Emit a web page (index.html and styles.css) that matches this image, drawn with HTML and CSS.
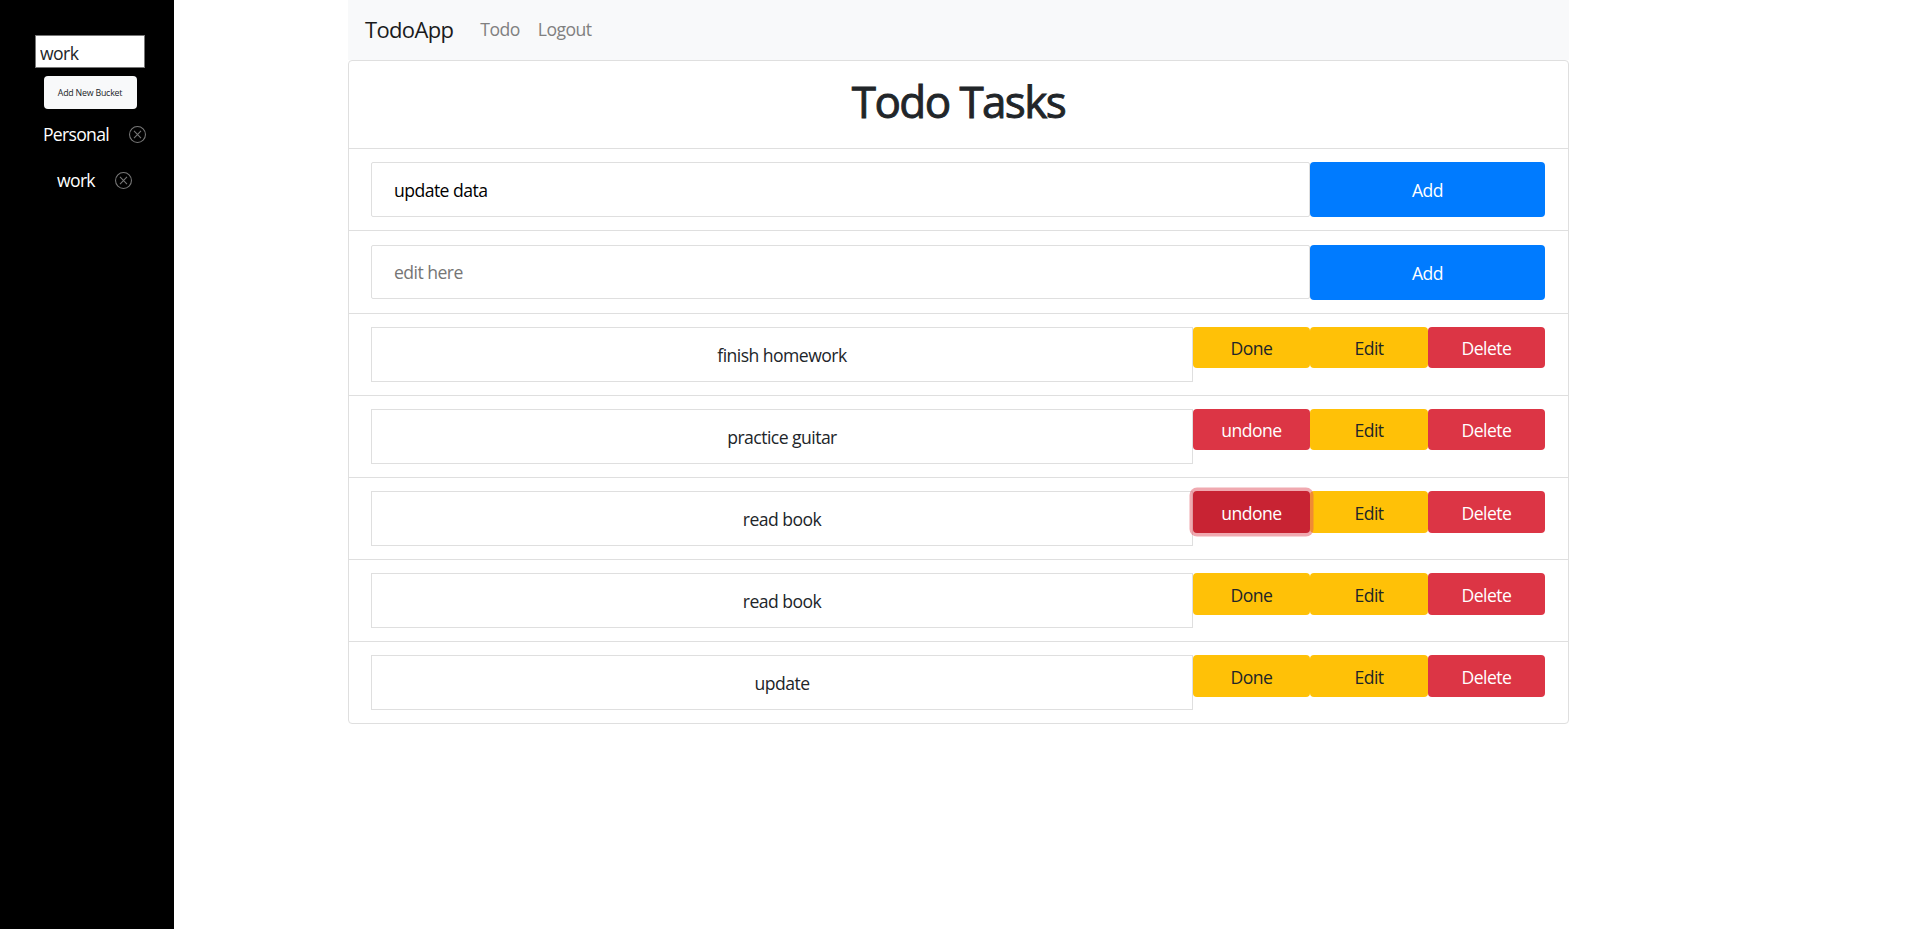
FILE: index.html
```html
<!DOCTYPE html>
<html lang="en">
<head>
<meta charset="utf-8">
<title>TodoApp</title>
<link rel="stylesheet" href="styles.css">
</head>
<body>
<aside class="sidebar">
  <input class="bucket-input" type="text" value="work" aria-label="Bucket name">
  <button class="bucket-add">Add New Bucket</button>
  <ul class="buckets">
    <li class="bucket"><a class="bucket-name">Personal</a><svg class="remove" viewBox="0 0 16 16"><circle cx="8" cy="8" r="7.5"/><path d="M4.7 4.7l6.6 6.6M11.3 4.7l-6.6 6.6"/></svg></li>
    <li class="bucket"><a class="bucket-name">work</a><svg class="remove" viewBox="0 0 16 16"><circle cx="8" cy="8" r="7.5"/><path d="M4.7 4.7l6.6 6.6M11.3 4.7l-6.6 6.6"/></svg></li>
  </ul>
</aside>
<main class="container">
  <nav class="navbar">
    <a class="brand">TodoApp</a>
    <a class="nav-link">Todo</a>
    <a class="nav-link">Logout</a>
  </nav>
  <section class="card">
    <header class="card-head"><h1 class="title">Todo Tasks</h1></header>
    <form class="row"><input class="field" type="text" value="update data" aria-label="Task"><button class="btn primary" type="button">Add</button></form>
    <form class="row edit-row"><input class="field" type="text" placeholder="edit here"><button class="btn primary" type="button">Add</button></form>
    <div class="row"><div class="task">finish homework</div><button class="btn warning">Done</button><button class="btn warning">Edit</button><button class="btn danger">Delete</button></div>
    <div class="row"><div class="task">practice guitar</div><button class="btn danger">undone</button><button class="btn warning">Edit</button><button class="btn danger">Delete</button></div>
    <div class="row"><div class="task">read book</div><button class="btn danger tall focused">undone</button><button class="btn warning tall">Edit</button><button class="btn danger tall">Delete</button></div>
    <div class="row"><div class="task">read book</div><button class="btn warning tall">Done</button><button class="btn warning tall">Edit</button><button class="btn danger tall">Delete</button></div>
    <div class="row"><div class="task">update</div><button class="btn warning tall">Done</button><button class="btn warning tall">Edit</button><button class="btn danger tall">Delete</button></div>
  </section>
</main>
</body>
</html>
```
FILE: styles.css
```css
* { box-sizing: border-box; }
body {
  margin: 0;
  height: 929px;
  display: flex;
  overflow: hidden;
  background: #fff;
  color: #212529;
  font: 17.6px/26px "Open Sans", sans-serif;
  letter-spacing: -0.55px;
}
input, button { font: inherit; letter-spacing: inherit; margin: 0; }
.sidebar {
  width: 174px;
  background: #000;
  display: flex;
  flex-direction: column;
  align-items: center;
  padding: 35px 0 0 6px;
}
.bucket-input {
  width: 110px;
  height: 33px;
  border: 1px solid #767676;
  border-radius: 0;
  padding: 2px 4px 0;
  color: #212529;
  background: #fff;
}
.bucket-add {
  width: 93px;
  height: 33px;
  margin-top: 8px;
  padding: 0;
  border: 0;
  border-radius: 4px;
  background: #f8f9fa;
  color: #212529;
  font-size: 8.8px;
  letter-spacing: -0.2px;
}
.buckets {
  list-style: none;
  margin: 12px 0 0;
  padding: 0;
  display: flex;
  flex-direction: column;
  align-items: center;
  gap: 20px;
}
.bucket { display: flex; align-items: center; gap: 20px; color: #fff; padding-left: 9px; letter-spacing: -0.7px; }
.bucket-name { white-space: nowrap; }
.remove { width: 17px; height: 17px; fill: none; stroke: #777; stroke-width: 1; }
.container { width: 1221px; margin-left: 174px; }
.navbar {
  height: 60px;
  padding: 0 17px 2px;
  display: flex;
  align-items: center;
  background: #f8f9fa;
}
.brand { font-size: 22px; color: #1a1b1c; margin: 0 27px 1px 0; letter-spacing: -0.65px; }
.nav-link { color: #808080; margin-right: 18px; }
.card { border: 1px solid #dfdfdf; border-radius: 4px; background: #fff; }
.card-head { height: 87px; padding-top: 14px; text-align: center; }
.title {
  margin: 0;
  font-size: 44px;
  line-height: 53px;
  font-weight: 400;
  letter-spacing: -1.6px;
  -webkit-text-stroke: 0.9px #212529;
}
.row {
  height: 82px;
  border-top: 1px solid #dfdfdf;
  padding: 13px 23px 0 22px;
  display: grid;
  grid-template-columns: 822px 117px 118px 117px;
  align-items: start;
}
.edit-row { height: 83px; padding-top: 14px; }
.field {
  grid-column: 1 / 3;
  height: 55px;
  padding: 0 22px;
  border: 1px solid #dfdfdf;
  border-radius: 2px;
  color: #000;
  background: #fff;
}
.edit-row .field { height: 54px; }
.field::placeholder { color: #757575; opacity: 1; }
.task { height: 55px; border: 1px solid #dfdfdf; text-align: center; line-height: 54px; }
.btn { height: 41px; padding: 1px 0 0; border: 0; border-radius: 4px; text-align: center; line-height: 40px; }
.tall { height: 42px; }
.primary { grid-column: 3 / 5; height: 55px; background: #007bff; color: #fff; }
.warning { background: #ffc107; color: #212529; }
.danger { background: #dc3545; color: #fff; }
.focused { position: relative; background: #c82333; box-shadow: 0 0 0 3.5px rgba(225, 83, 97, .5); }
```
